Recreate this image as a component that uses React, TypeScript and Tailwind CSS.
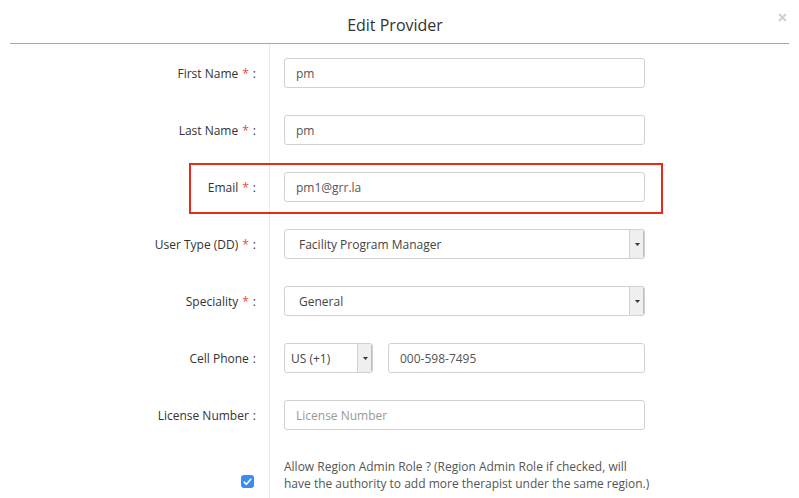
import React from 'react';

const font = { fontFamily: '"Open Sans", "Liberation Sans", sans-serif' };

function Label({ text, required }: { text: string; required?: boolean }) {
  return (
    <div className="w-[270px] shrink-0 border-r border-[#e9e9e9] pr-[13px] pt-[15px] flex justify-end">
      <div className="h-[30px] flex items-center text-[12px] text-[#333]">
        {text}
        {required && <span className="text-[#e74c3c] ml-[4px]">*</span>}
        <span className="ml-[4px]">:</span>
      </div>
    </div>
  );
}

function Caret() {
  return (
    <div className="w-[15px] h-full shrink-0 border-l border-[#d0d0d0] bg-[#efefef] flex items-center justify-center shadow-[inset_-1px_0_0_#bdbdbd]">
      <svg width="5" height="3" viewBox="0 0 5 3">
        <path d="M0 0 L5 0 L2.5 3 Z" fill="#333" />
      </svg>
    </div>
  );
}

function TextInput({ value, placeholder }: { value?: string; placeholder?: string }) {
  return (
    <div className="h-[30px] w-full border border-[#d2d2d2] rounded-[3px] bg-white flex items-center px-[11px] pt-[2px] text-[12px]">
      {value ? <span className="text-[#555]">{value}</span> : <span className="text-[#999]">{placeholder}</span>}
    </div>
  );
}

function Select({ value }: { value: string }) {
  return (
    <div className="h-[30px] w-full border border-[#d2d2d2] rounded-[3px] bg-white flex items-center text-[12px] overflow-hidden">
      <span className="flex-1 pl-[14px] pt-[2px] text-[#444]">{value}</span>
      <Caret />
    </div>
  );
}

function Row({ label, required, children }: { label: string; required?: boolean; children: React.ReactNode }) {
  return (
    <div className="flex h-[57px]">
      <Label text={label} required={required} />
      <div className="pt-[14px] pl-[14px] w-[375px]">{children}</div>
    </div>
  );
}

export default function App() {
  return (
    <div className="w-[799px] h-[498px] bg-white overflow-hidden relative" style={font}>
      <div className="relative mx-[10px] h-[44px] border-b border-[#a8a8a8] flex justify-center pt-[14px] pr-[9px]">
        <h2 className="text-[16px] leading-[22px] text-[#333]">Edit Provider</h2>
        <button className="absolute right-[2px] top-[13px] p-0">
          <svg width="9" height="9" viewBox="0 0 9 9">
            <path d="M1 1 L8 8 M8 1 L1 8" stroke="#cfcfcf" strokeWidth="2" />
          </svg>
        </button>
      </div>

      <div className="relative">
        <Row label="First Name" required>
          <TextInput value="pm" />
        </Row>
        <Row label="Last Name" required>
          <TextInput value="pm" />
        </Row>
        <Row label="Email" required>
          <TextInput value="pm1@grr.la" />
        </Row>
        <Row label="User Type (DD)" required>
          <Select value="Facility Program Manager" />
        </Row>
        <Row label="Speciality" required>
          <Select value="General" />
        </Row>
        <Row label="Cell Phone">
          <div className="flex gap-[15px]">
            <div className="h-[30px] w-[89px] shrink-0 border border-[#d2d2d2] rounded-[3px] bg-white flex items-center text-[12px] overflow-hidden">
              <span className="flex-1 pl-[6px] pt-[2px] text-[#444]">US (+1)</span>
              <Caret />
            </div>
            <TextInput value="000-598-7495" />
          </div>
        </Row>
        <Row label="License Number">
          <TextInput placeholder="License Number" />
        </Row>
        <div className="flex h-[70px]">
          <div className="w-[270px] shrink-0 border-r border-[#e9e9e9] pr-[15px] flex justify-end items-start pt-[32px]">
            <div className="w-[13px] h-[13px] rounded-[3px] bg-[#3a8cf3] flex items-center justify-center">
              <svg width="9" height="8" viewBox="0 0 9 8">
                <path d="M1.2 4.2 L3.4 6.3 L7.8 1.2" stroke="white" strokeWidth="1.6" fill="none" strokeLinecap="round" strokeLinejoin="round" />
              </svg>
            </div>
          </div>
          <p className="pl-[14px] pt-[15px] w-[380px] text-[12px] leading-[17px] text-[#555]">
            Allow Region Admin Role ? (Region Admin Role if checked, will have the authority to add more therapist under the same region.)
          </p>
        </div>

        <div className="absolute left-[189px] top-[119px] w-[474px] h-[51px] border-2 border-[#e8291c] pointer-events-none" />
      </div>
    </div>
  );
}
